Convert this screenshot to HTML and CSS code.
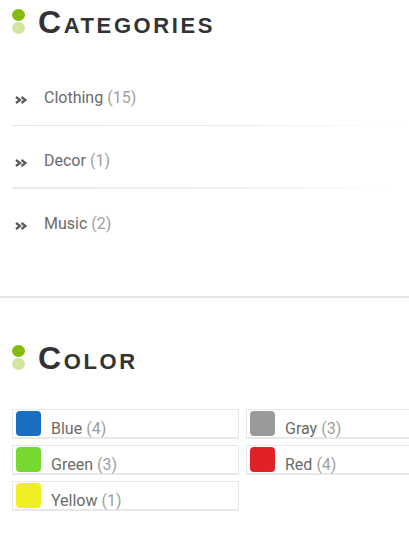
FILE: index.html
```html
<!DOCTYPE html>
<html>
<head>
<meta charset="utf-8">
<link rel="stylesheet" href="styles.css">
</head>
<body>
<section class="widget categories">
  <h3 class="widget-title"><span class="dots"><i class="dot dot-a"></i><i class="dot dot-b"></i></span><span class="title-text">Categories</span></h3>
  <ul class="cat-list">
    <li class="cat-item"><svg class="chev" width="12" height="8" viewBox="0 0 12 8"><path d="M1 1 L5 4 L1 7 M6.5 1 L10.5 4 L6.5 7" fill="none" stroke="#5a5a5a" stroke-width="2.2"/></svg><a class="cat-name">Clothing</a> <span class="count">(15)</span></li>
    <li class="cat-item"><svg class="chev" width="12" height="8" viewBox="0 0 12 8"><path d="M1 1 L5 4 L1 7 M6.5 1 L10.5 4 L6.5 7" fill="none" stroke="#5a5a5a" stroke-width="2.2"/></svg><a class="cat-name">Decor</a> <span class="count">(1)</span></li>
    <li class="cat-item last"><svg class="chev" width="12" height="8" viewBox="0 0 12 8"><path d="M1 1 L5 4 L1 7 M6.5 1 L10.5 4 L6.5 7" fill="none" stroke="#5a5a5a" stroke-width="2.2"/></svg><a class="cat-name">Music</a> <span class="count">(2)</span></li>
  </ul>
</section>
<hr class="divider">
<section class="widget colors">
  <h3 class="widget-title"><span class="dots"><i class="dot dot-a"></i><i class="dot dot-b"></i></span><span class="title-text">Color</span></h3>
  <ul class="color-grid">
    <li class="color-item"><span class="swatch blue"></span><span class="label">Blue</span> <span class="count">(4)</span></li>
    <li class="color-item"><span class="swatch gray"></span><span class="label">Gray</span> <span class="count">(3)</span></li>
    <li class="color-item"><span class="swatch green"></span><span class="label">Green</span> <span class="count">(3)</span></li>
    <li class="color-item"><span class="swatch red"></span><span class="label">Red</span> <span class="count">(4)</span></li>
    <li class="color-item"><span class="swatch yellow"></span><span class="label">Yellow</span> <span class="count">(1)</span></li>
  </ul>
</section>
</body>
</html>
```
FILE: styles.css
```css
html, body {
  margin: 0;
  padding: 0;
  overflow: hidden;
  background: #fff;
}
body {
  font-family: Roboto, "Liberation Sans", sans-serif;
  color: #666;
}
.widget {
  padding: 0 12px;
}
.categories {
  padding-top: 8px;
}
.widget-title {
  margin: 0;
  display: flex;
  align-items: center;
  height: 26px;
}
.dots {
  display: flex;
  flex-direction: column;
  gap: 1px;
  margin-right: 13px;
}
.dot {
  display: block;
  width: 13px;
  height: 12px;
  border-radius: 50%;
}
.dot-a { background: #86bb0a; }
.dot-b { background: #d0e59e; }
.title-text {
  font-family: "Liberation Sans", Arial, sans-serif;
  font-weight: bold;
  font-size: 32px;
  font-variant: small-caps;
  letter-spacing: 2.6px;
  color: #333;
  line-height: 26px;
  position: relative;
  top: 1px;
}
.cat-list {
  list-style: none;
  margin: 29px 0 0;
  padding: 0;
}
.cat-item {
  font-size: 16px;
  line-height: 20px;
  padding: 25px 0 18px;
  position: relative;
  display: flex;
  align-items: baseline;
}
.cat-item::after {
  content: "";
  position: absolute;
  left: 0;
  right: -12px;
  bottom: 0;
  height: 1px;
  background: linear-gradient(to right, #e3e5ea 0%, #eceef1 60%, rgba(255,255,255,0) 100%);
}
.cat-item:nth-child(2)::after {
  height: 2px;
  background: linear-gradient(to right, #e9eaee 0%, #eff0f2 55%, rgba(255,255,255,0) 95%);
}
.cat-item.last::after { display: none; }
.chev {
  flex: none;
  margin-left: 3px;
  margin-right: 17px;
  align-self: center;
  position: relative;
  top: 2px;
}
.cat-name {
  color: #6b6b6b;
  margin-right: 4px;
}
.count {
  color: #a0a0a0;
}
.divider {
  border: 0;
  height: 2px;
  background: #e6e6e6;
  margin: 44px 0 0;
}
.colors {
  padding-top: 46px;
}
.color-grid {
  list-style: none;
  margin: 39px 0 0;
  padding: 0;
  display: grid;
  grid-template-columns: 227px 227px;
  column-gap: 7px;
  row-gap: 6px;
}
.color-item {
  box-sizing: border-box;
  height: 30px;
  border: 1px solid #e8e8e8;
  border-bottom-width: 2px;
  padding: 1px 3px 0;
  display: flex;
  align-items: flex-end;
  font-size: 16px;
  line-height: 16px;
}
.swatch {
  align-self: flex-start;
  width: 25px;
  height: 25px;
  border-radius: 4px;
  margin-right: 10px;
  flex: none;
}
.label { color: #6b6b6b; margin-right: 4px; }
.blue { background: #1a6ec2; }
.gray { background: #9a9a9a; }
.green { background: #77d832; }
.red { background: #e02227; }
.yellow { background: #f0ee24; }
```
